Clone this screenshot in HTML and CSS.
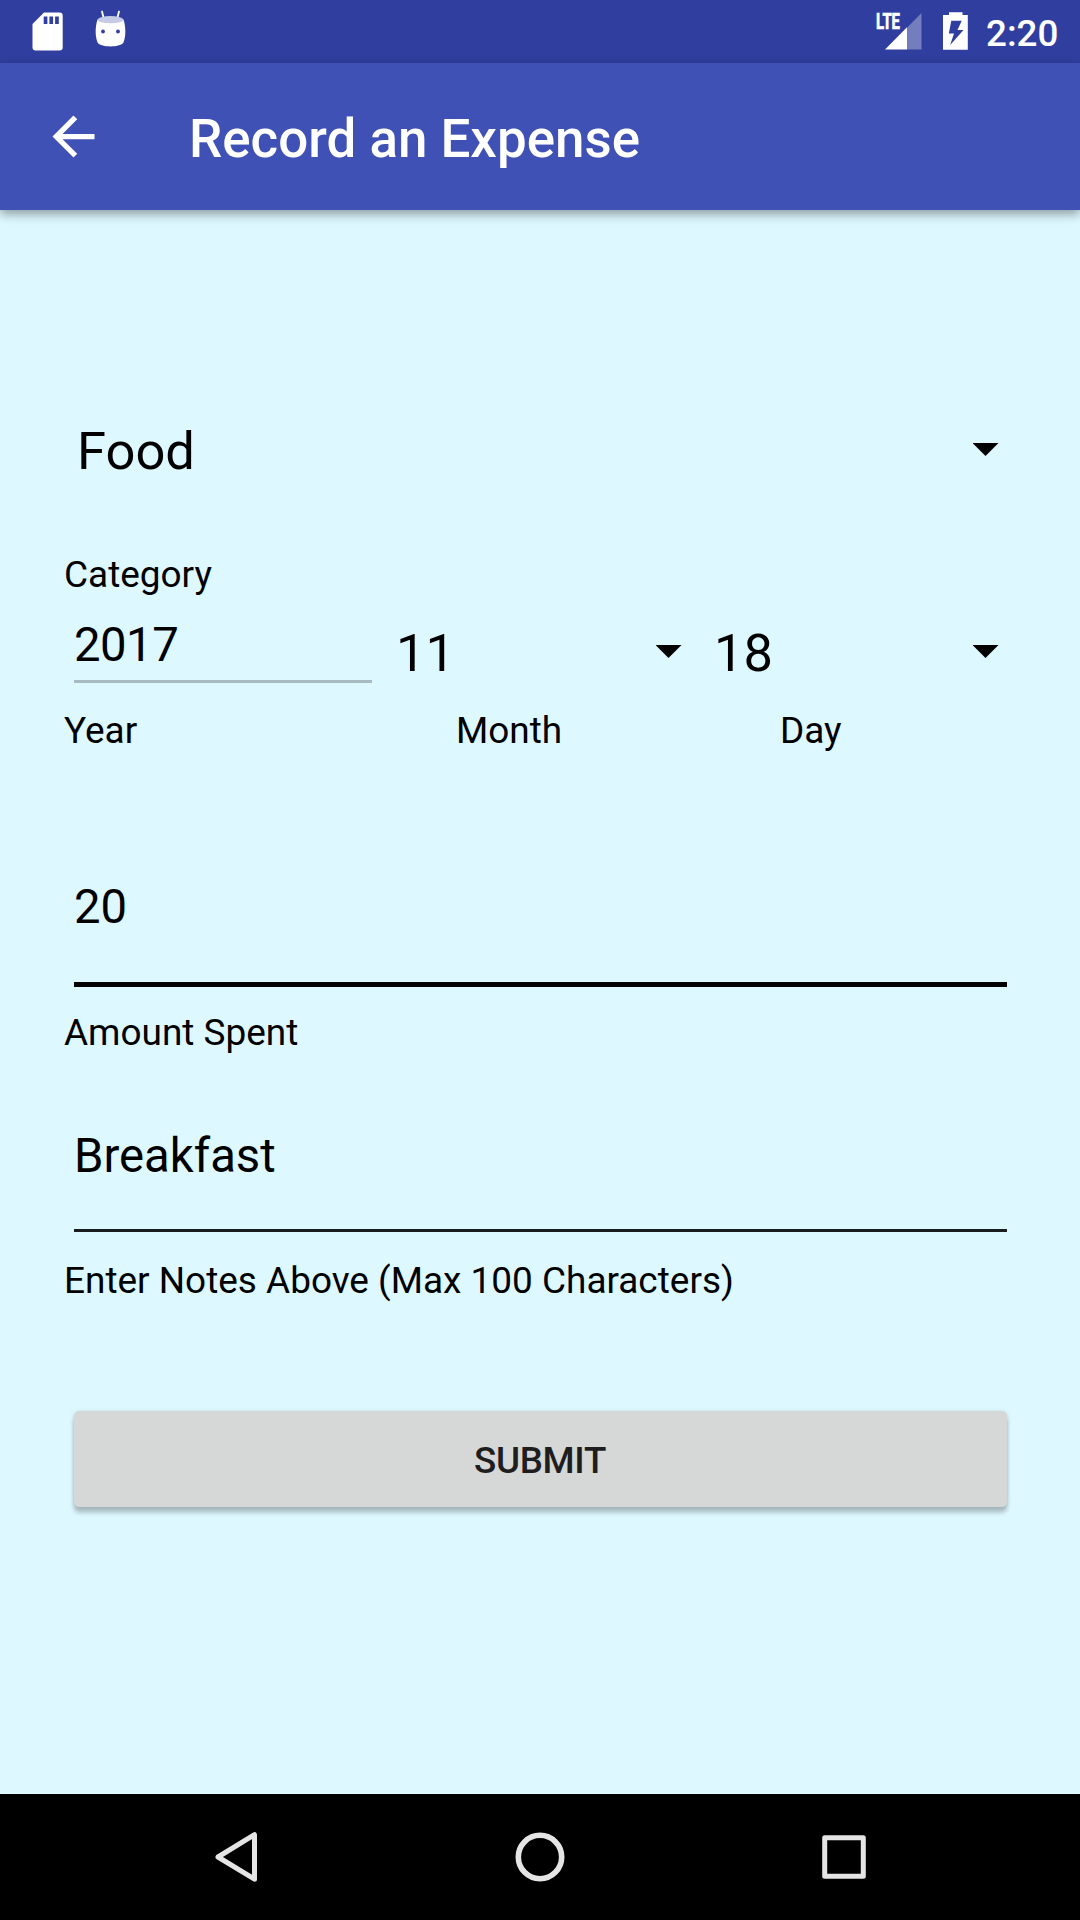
FILE: index.html
```html
<!DOCTYPE html>
<html lang="en">
<head>
<meta charset="utf-8">
<title>Record an Expense</title>
<link rel="stylesheet" href="styles.css">
</head>
<body>
<div class="screen">
  <div class="status-bar">
    <svg class="notifications" width="160" height="63" viewBox="0 0 160 63">
      <path fill="#fff" d="M44 12.500H59.500a3.200 3.200 0 0 1 3.200 3.200V47.300a3.200 3.200 0 0 1-3.200 3.200H35.700a3.200 3.200 0 0 1-3.200-3.200V24z"/>
      <path fill="#303f9f" d="M43.700 16.500h3.700v7.500h-3.700zM49.400 16.500h3.700v7.500h-3.700zM55.100 16.500h3.700v7.500h-3.700z"/>
      <path stroke="#fff" stroke-width="1.800" stroke-linecap="round" d="M102 11.500l1.600 6.500M119 11.500l-1.600 6.500"/>
      <path fill="#fff" d="M97.500 19.500C95 27 95 37 97.800 43c4 4.500 21.400 4.500 25.400 0 2.800-6 2.800-16 .300-23.500z"/>
      <ellipse fill="#c5cae6" cx="110.500" cy="19.700" rx="12.800" ry="3.600"/>
      <circle fill="#303f9f" cx="103" cy="31.500" r="1.900"/>
      <circle fill="#303f9f" cx="118" cy="31.500" r="1.900"/>
    </svg>
    <div class="system">
      <svg width="110" height="63" viewBox="870 0 110 63">
        <path fill="#747dbe" d="M907 27.700L921.500 13v36.500H907z"/>
        <path fill="#fff" d="M907 27.200V49.500H885z"/>
        <text class="network" x="876" y="29" textLength="24" lengthAdjust="spacingAndGlyphs">LTE</text>
        <path fill="#fff" fill-rule="evenodd" d="M949 12.300h13.500v2.700h5.300v34.700h-24.800V15h6zM951.300 20.700l-2.500 12.700h5.200l-3.800 11.600 13.300-15h-6l4.200-9.300z"/>
      </svg>
      <span class="clock">2:20</span>
    </div>
  </div>
  <header class="app-bar">
    <svg class="back" width="63" height="63" viewBox="0 0 24 24"><path fill="#fff" d="M20 11H7.830l5.590-5.590L12 4l-8 8 8 8 1.410-1.410L7.830 13H20z"/></svg>
    <h1 class="title">Record an Expense</h1>
  </header>
  <main class="form">
    <div class="spinner category"><span>Food</span><i class="caret"></i></div>
    <div class="label category-label">Category</div>
    <div class="date-row">
      <div class="field year"><span>2017</span></div>
      <div class="spinner"><span>11</span><i class="caret"></i></div>
      <div class="spinner"><span>18</span><i class="caret"></i></div>
    </div>
    <div class="date-labels">
      <span class="label">Year</span>
      <span class="label">Month</span>
      <span class="label">Day</span>
    </div>
    <div class="field amount"><span>20</span></div>
    <div class="label amount-label">Amount Spent</div>
    <div class="field notes"><span>Breakfast</span></div>
    <div class="label notes-label">Enter Notes Above (Max 100 Characters)</div>
    <button class="submit">SUBMIT</button>
  </main>
  <nav class="nav-bar">
    <svg width="1080" height="126" viewBox="0 0 1080 126" fill="none" stroke="#e5e5e5" stroke-width="5" stroke-linejoin="round">
      <path d="M254.500 40.700V85.200L218 63z"/>
      <circle cx="540" cy="63" r="21.700" stroke-width="5.600"/>
      <rect x="824.700" y="43.700" width="38.600" height="38.600"/>
    </svg>
  </nav>
</div>
</body>
</html>
```
FILE: styles.css
```css
* { box-sizing: border-box; }

body {
  margin: 0;
  font-family: Roboto, sans-serif;
  color: #000;
}

svg { display: block; }

.screen {
  display: flex;
  flex-direction: column;
  width: 1080px;
  height: 1920px;
  background: #def8ff;
  overflow: hidden;
}

.status-bar {
  display: flex;
  justify-content: space-between;
  flex: none;
  height: 63px;
  background: #303f9f;
}

.system {
  display: flex;
  width: 210px;
}

.network {
  font: bold 22px Roboto, sans-serif;
  fill: #fff;
  stroke: #fff;
  stroke-width: 0.7px;
}

.clock {
  padding: 2px 0 0 6px;
  font-size: 36.75px;
  font-weight: 500;
  line-height: 63px;
  color: #fff;
}

.app-bar {
  display: flex;
  align-items: center;
  flex: none;
  height: 147px;
  padding-left: 42px;
  background: #3f51b5;
  box-shadow: 0 4px 10px rgba(0, 0, 0, 0.38);
}

.title {
  margin: 0 0 0 84px;
  padding-top: 4px;
  font-size: 52.9px;
  font-weight: 500;
  line-height: 62px;
  color: #fff;
}

.form {
  display: flex;
  flex-direction: column;
  flex: 1;
  padding: 210px 63px 0;
}

.spinner {
  display: flex;
  justify-content: space-between;
  height: 62px;
  padding: 0 18.5px 0 14px;
  font-size: 52.5px;
  line-height: 62px;
}

.caret {
  width: 26px;
  height: 13px;
  margin-top: 23px;
  background: #000;
  clip-path: polygon(0 0, 100% 0, 50% 100%);
}

.label {
  padding-left: 1px;
  font-size: 36.95px;
  line-height: 52px;
  height: 50px;
  white-space: nowrap;
}

.category-label { margin-top: 67px; }

.field {
  margin: 0 10.5px;
  font-size: 47.25px;
  line-height: 57px;
}

.field span { padding-left: 0.5px; }

.date-row {
  display: grid;
  grid-template-columns: 319px 318px 1fr;
  align-items: start;
  padding-top: 17px;
  height: 106px;
}

.date-row .spinner { margin-top: 6px; }

.year {
  height: 67px;
  border-bottom: 3px solid #a7bbc0;
  line-height: 58px;
  letter-spacing: -0.5px;
}

.date-labels {
  display: grid;
  grid-template-columns: 392px 324px 1fr;
}

.amount {
  height: 108px;
  margin-top: 124px;
  border-bottom: 5px solid #000;
}

.amount-label { margin-top: 20px; }

.notes {
  height: 105px;
  margin-top: 70px;
  border-bottom: 3px solid #1a1d1e;
  line-height: 58px;
}

.notes-label { margin-top: 23px; }

.submit {
  flex: none;
  height: 96px;
  margin: 106px 10.5px 0;
  padding: 2px 0 0;
  border: 0;
  border-radius: 5px;
  background: #d6d7d7;
  box-shadow: 0 6px 4px rgba(0, 0, 0, 0.2), 0 1px 5px rgba(0, 0, 0, 0.14);
  font: 500 36.75px Roboto, sans-serif;
  letter-spacing: -0.3px;
  color: #1e1e1e;
}

.nav-bar {
  flex: none;
  height: 126px;
  background: #000;
}
```
